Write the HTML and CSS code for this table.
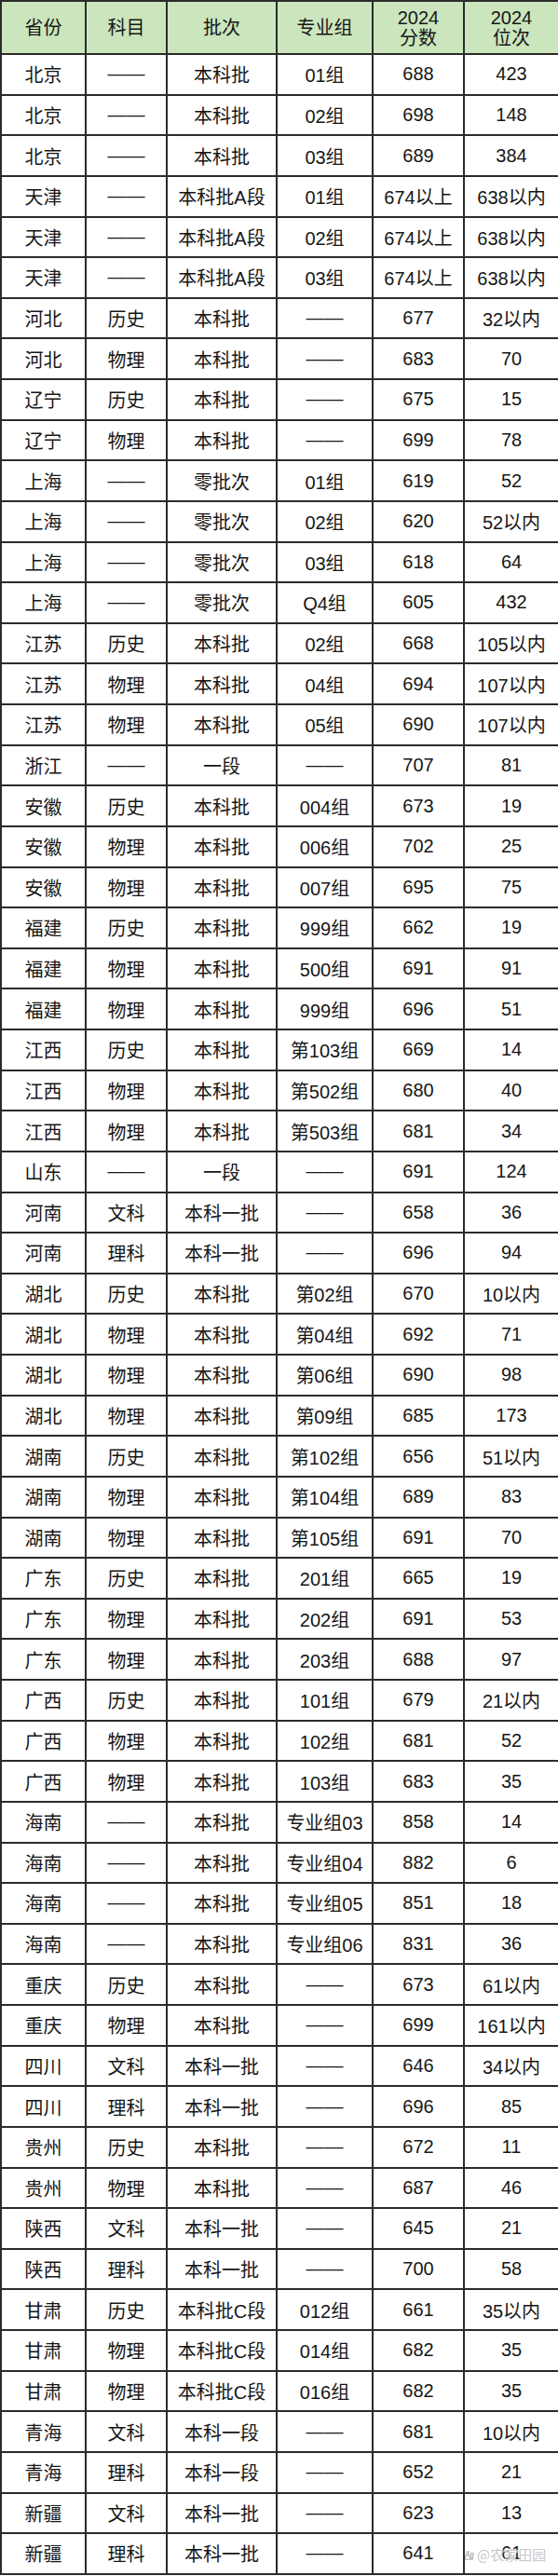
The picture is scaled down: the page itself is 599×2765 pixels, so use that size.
FILE: index.html
```html
<!DOCTYPE html>
<html lang="zh-CN">
<head>
<meta charset="utf-8">
<title>2024 分数位次</title>
<link rel="stylesheet" href="styles.css">
</head>
<body>
<table class="score-table">
<colgroup>
<col class="c1"><col class="c2"><col class="c3"><col class="c4"><col class="c5"><col class="c6">
</colgroup>
<thead>
<tr class="head"><th>省份</th><th>科目</th><th>批次</th><th>专业组</th><th>2024<br>分数</th><th>2024<br>位次</th></tr>
</thead>
<tbody>
<tr><td>北京</td><td>——</td><td>本科批</td><td>01组</td><td>688</td><td>423</td></tr>
<tr><td>北京</td><td>——</td><td>本科批</td><td>02组</td><td>698</td><td>148</td></tr>
<tr><td>北京</td><td>——</td><td>本科批</td><td>03组</td><td>689</td><td>384</td></tr>
<tr><td>天津</td><td>——</td><td>本科批A段</td><td>01组</td><td>674以上</td><td>638以内</td></tr>
<tr><td>天津</td><td>——</td><td>本科批A段</td><td>02组</td><td>674以上</td><td>638以内</td></tr>
<tr><td>天津</td><td>——</td><td>本科批A段</td><td>03组</td><td>674以上</td><td>638以内</td></tr>
<tr><td>河北</td><td>历史</td><td>本科批</td><td>——</td><td>677</td><td>32以内</td></tr>
<tr><td>河北</td><td>物理</td><td>本科批</td><td>——</td><td>683</td><td>70</td></tr>
<tr><td>辽宁</td><td>历史</td><td>本科批</td><td>——</td><td>675</td><td>15</td></tr>
<tr><td>辽宁</td><td>物理</td><td>本科批</td><td>——</td><td>699</td><td>78</td></tr>
<tr><td>上海</td><td>——</td><td>零批次</td><td>01组</td><td>619</td><td>52</td></tr>
<tr><td>上海</td><td>——</td><td>零批次</td><td>02组</td><td>620</td><td>52以内</td></tr>
<tr><td>上海</td><td>——</td><td>零批次</td><td>03组</td><td>618</td><td>64</td></tr>
<tr><td>上海</td><td>——</td><td>零批次</td><td>Q4组</td><td>605</td><td>432</td></tr>
<tr><td>江苏</td><td>历史</td><td>本科批</td><td>02组</td><td>668</td><td>105以内</td></tr>
<tr><td>江苏</td><td>物理</td><td>本科批</td><td>04组</td><td>694</td><td>107以内</td></tr>
<tr><td>江苏</td><td>物理</td><td>本科批</td><td>05组</td><td>690</td><td>107以内</td></tr>
<tr><td>浙江</td><td>——</td><td>一段</td><td>——</td><td>707</td><td>81</td></tr>
<tr><td>安徽</td><td>历史</td><td>本科批</td><td>004组</td><td>673</td><td>19</td></tr>
<tr><td>安徽</td><td>物理</td><td>本科批</td><td>006组</td><td>702</td><td>25</td></tr>
<tr><td>安徽</td><td>物理</td><td>本科批</td><td>007组</td><td>695</td><td>75</td></tr>
<tr><td>福建</td><td>历史</td><td>本科批</td><td>999组</td><td>662</td><td>19</td></tr>
<tr><td>福建</td><td>物理</td><td>本科批</td><td>500组</td><td>691</td><td>91</td></tr>
<tr><td>福建</td><td>物理</td><td>本科批</td><td>999组</td><td>696</td><td>51</td></tr>
<tr><td>江西</td><td>历史</td><td>本科批</td><td>第103组</td><td>669</td><td>14</td></tr>
<tr><td>江西</td><td>物理</td><td>本科批</td><td>第502组</td><td>680</td><td>40</td></tr>
<tr><td>江西</td><td>物理</td><td>本科批</td><td>第503组</td><td>681</td><td>34</td></tr>
<tr><td>山东</td><td>——</td><td>一段</td><td>——</td><td>691</td><td>124</td></tr>
<tr><td>河南</td><td>文科</td><td>本科一批</td><td>——</td><td>658</td><td>36</td></tr>
<tr><td>河南</td><td>理科</td><td>本科一批</td><td>——</td><td>696</td><td>94</td></tr>
<tr><td>湖北</td><td>历史</td><td>本科批</td><td>第02组</td><td>670</td><td>10以内</td></tr>
<tr><td>湖北</td><td>物理</td><td>本科批</td><td>第04组</td><td>692</td><td>71</td></tr>
<tr><td>湖北</td><td>物理</td><td>本科批</td><td>第06组</td><td>690</td><td>98</td></tr>
<tr><td>湖北</td><td>物理</td><td>本科批</td><td>第09组</td><td>685</td><td>173</td></tr>
<tr><td>湖南</td><td>历史</td><td>本科批</td><td>第102组</td><td>656</td><td>51以内</td></tr>
<tr><td>湖南</td><td>物理</td><td>本科批</td><td>第104组</td><td>689</td><td>83</td></tr>
<tr><td>湖南</td><td>物理</td><td>本科批</td><td>第105组</td><td>691</td><td>70</td></tr>
<tr><td>广东</td><td>历史</td><td>本科批</td><td>201组</td><td>665</td><td>19</td></tr>
<tr><td>广东</td><td>物理</td><td>本科批</td><td>202组</td><td>691</td><td>53</td></tr>
<tr><td>广东</td><td>物理</td><td>本科批</td><td>203组</td><td>688</td><td>97</td></tr>
<tr><td>广西</td><td>历史</td><td>本科批</td><td>101组</td><td>679</td><td>21以内</td></tr>
<tr><td>广西</td><td>物理</td><td>本科批</td><td>102组</td><td>681</td><td>52</td></tr>
<tr><td>广西</td><td>物理</td><td>本科批</td><td>103组</td><td>683</td><td>35</td></tr>
<tr><td>海南</td><td>——</td><td>本科批</td><td>专业组03</td><td>858</td><td>14</td></tr>
<tr><td>海南</td><td>——</td><td>本科批</td><td>专业组04</td><td>882</td><td>6</td></tr>
<tr><td>海南</td><td>——</td><td>本科批</td><td>专业组05</td><td>851</td><td>18</td></tr>
<tr><td>海南</td><td>——</td><td>本科批</td><td>专业组06</td><td>831</td><td>36</td></tr>
<tr><td>重庆</td><td>历史</td><td>本科批</td><td>——</td><td>673</td><td>61以内</td></tr>
<tr><td>重庆</td><td>物理</td><td>本科批</td><td>——</td><td>699</td><td>161以内</td></tr>
<tr><td>四川</td><td>文科</td><td>本科一批</td><td>——</td><td>646</td><td>34以内</td></tr>
<tr><td>四川</td><td>理科</td><td>本科一批</td><td>——</td><td>696</td><td>85</td></tr>
<tr><td>贵州</td><td>历史</td><td>本科批</td><td>——</td><td>672</td><td>11</td></tr>
<tr><td>贵州</td><td>物理</td><td>本科批</td><td>——</td><td>687</td><td>46</td></tr>
<tr><td>陕西</td><td>文科</td><td>本科一批</td><td>——</td><td>645</td><td>21</td></tr>
<tr><td>陕西</td><td>理科</td><td>本科一批</td><td>——</td><td>700</td><td>58</td></tr>
<tr><td>甘肃</td><td>历史</td><td>本科批C段</td><td>012组</td><td>661</td><td>35以内</td></tr>
<tr><td>甘肃</td><td>物理</td><td>本科批C段</td><td>014组</td><td>682</td><td>35</td></tr>
<tr><td>甘肃</td><td>物理</td><td>本科批C段</td><td>016组</td><td>682</td><td>35</td></tr>
<tr><td>青海</td><td>文科</td><td>本科一段</td><td>——</td><td>681</td><td>10以内</td></tr>
<tr><td>青海</td><td>理科</td><td>本科一段</td><td>——</td><td>652</td><td>21</td></tr>
<tr><td>新疆</td><td>文科</td><td>本科一批</td><td>——</td><td>623</td><td>13</td></tr>
<tr><td>新疆</td><td>理科</td><td>本科一批</td><td>——</td><td>641</td><td class="marked">61<span class="watermark"><svg class="wm-icon" viewBox="0 0 14 14" width="13" height="13"><path d="M2 12 L5 3 L7 3 L5.5 8 L9 8 L8 12 Z M9 5 L12 5 L11 12 L9.5 12 Z" fill="none" stroke="#b8b8b8" stroke-width="1.4" stroke-linejoin="round"/></svg>@农家田园</span></td></tr>
</tbody>
</table>
</body>
</html>
```
FILE: styles.css
```css
html, body {
  margin: 0;
  padding: 0;
  background: #ffffff;
}

.score-table {
  width: 599px;
  table-layout: fixed;
  border-collapse: collapse;
  font-family: "Liberation Sans", "Noto Sans CJK SC", sans-serif;
  font-size: 20px;
  color: #161616;
}

.c1 { width: 91px; }
.c2 { width: 87px; }
.c3 { width: 118px; }
.c4 { width: 103px; }
.c5 { width: 98px; }
.c6 { width: 102px; }

.score-table th,
.score-table td {
  border: 2px solid #2b2b2b;
  padding: 0;
  text-align: center;
  vertical-align: middle;
  white-space: nowrap;
  overflow: hidden;
}

.score-table th {
  background: #cbe5bc;
  font-weight: normal;
  line-height: 22px;
}

.head {
  height: 57px;
}

.score-table tbody tr {
  height: 43.64px;
}

.marked {
  position: relative;
}

.watermark {
  position: absolute;
  left: -2px;
  top: 14px;
  display: flex;
  align-items: center;
  gap: 2px;
  font-size: 15px;
  color: #c9c9c9;
  text-shadow: 0 0 1px #ffffff, 0 0 2px #ffffff;
  font-family: "Noto Sans CJK SC", sans-serif;
  line-height: 16px;
}

.wm-icon {
  flex: none;
}
```
